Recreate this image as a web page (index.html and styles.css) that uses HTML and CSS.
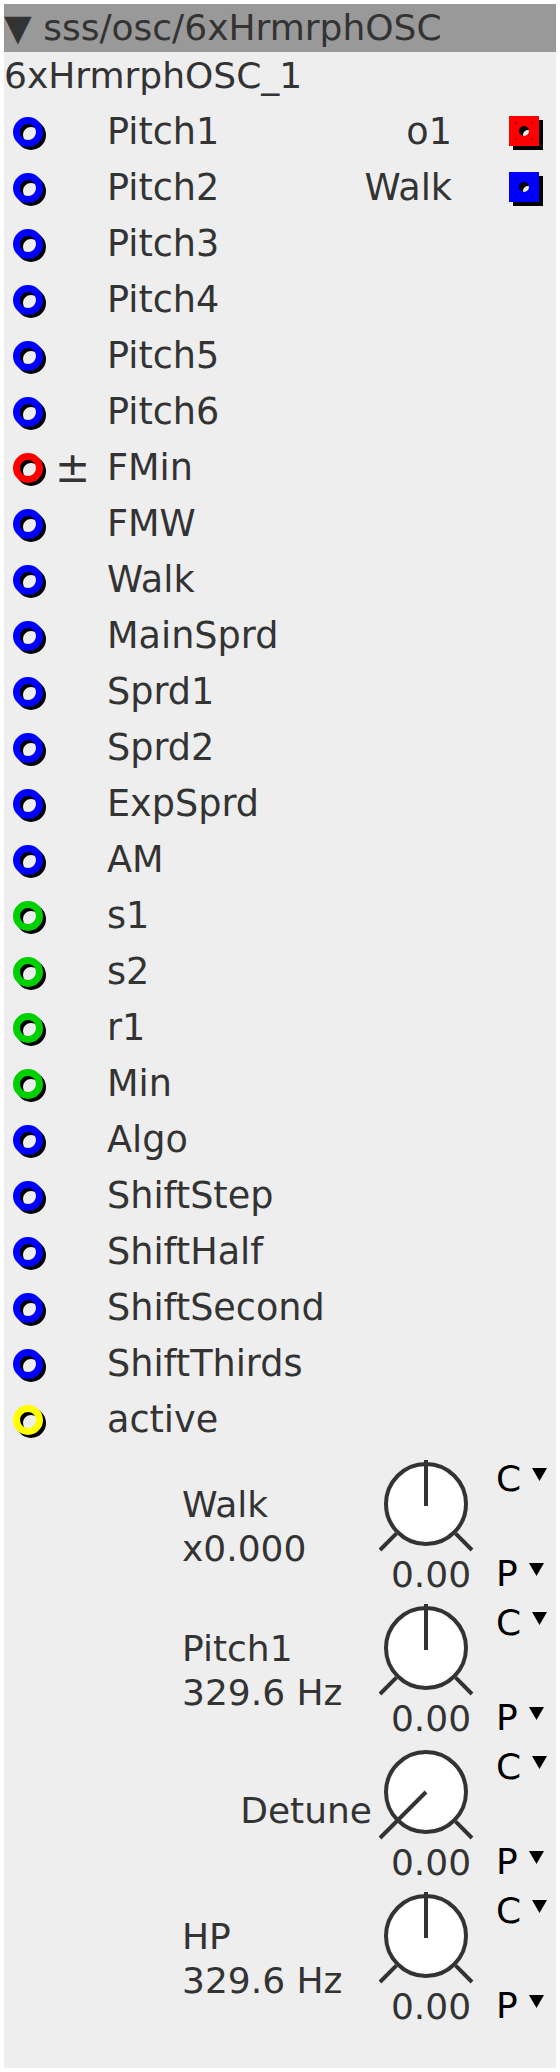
FILE: index.html
```html
<!DOCTYPE html>
<html lang="en">
<head>
    <meta charset="UTF-8">
    <title>6xHrmrphOSC</title>
    <link rel="stylesheet" href="styles.css">
</head>
<body>
    <div class="node">
        <div class="node-head">▼ sss/osc/6xHrmrphOSC</div>
        <div class="node-name">6xHrmrphOSC_1</div>

        <div class="ports">
            <div class="port">
                <span class="port-in"><svg class="jack blue" viewBox="0 0 36 36"><circle class="jack-shadow" cx="21" cy="21" r="11.5"/><circle class="jack-ring" cx="18" cy="18" r="11.5"/></svg></span>
                <span class="port-mod"></span>
                <span class="port-name">Pitch1</span>
                <span class="port-out-name">o1</span>
                <span class="port-out"><svg class="outlet red" viewBox="0 0 40 40"><path class="outlet-shadow" d="M8 8h30v30H8z M18 23a5 5 0 1 0 10 0a5 5 0 1 0 -10 0z"/><path class="outlet-box" d="M4 4h30v30H4z M14 19a5 5 0 1 0 10 0a5 5 0 1 0 -10 0z"/><path class="outlet-dots" d="M10 10h1.5v1.5H10z M26.5 10H28v1.5h-1.5z M10 26.5h1.5V28H10z M26.5 26.5H28V28h-1.5z"/></svg></span>
            </div>
            <div class="port">
                <span class="port-in"><svg class="jack blue" viewBox="0 0 36 36"><circle class="jack-shadow" cx="21" cy="21" r="11.5"/><circle class="jack-ring" cx="18" cy="18" r="11.5"/></svg></span>
                <span class="port-mod"></span>
                <span class="port-name">Pitch2</span>
                <span class="port-out-name">Walk</span>
                <span class="port-out"><svg class="outlet blue" viewBox="0 0 40 40"><path class="outlet-shadow" d="M8 8h30v30H8z M18 23a5 5 0 1 0 10 0a5 5 0 1 0 -10 0z"/><path class="outlet-box" d="M4 4h30v30H4z M14 19a5 5 0 1 0 10 0a5 5 0 1 0 -10 0z"/><path class="outlet-dots" d="M10 10h1.5v1.5H10z M26.5 10H28v1.5h-1.5z M10 26.5h1.5V28H10z M26.5 26.5H28V28h-1.5z"/></svg></span>
            </div>
            <div class="port">
                <span class="port-in"><svg class="jack blue" viewBox="0 0 36 36"><circle class="jack-shadow" cx="21" cy="21" r="11.5"/><circle class="jack-ring" cx="18" cy="18" r="11.5"/></svg></span>
                <span class="port-mod"></span>
                <span class="port-name">Pitch3</span>
            </div>
            <div class="port">
                <span class="port-in"><svg class="jack blue" viewBox="0 0 36 36"><circle class="jack-shadow" cx="21" cy="21" r="11.5"/><circle class="jack-ring" cx="18" cy="18" r="11.5"/></svg></span>
                <span class="port-mod"></span>
                <span class="port-name">Pitch4</span>
            </div>
            <div class="port">
                <span class="port-in"><svg class="jack blue" viewBox="0 0 36 36"><circle class="jack-shadow" cx="21" cy="21" r="11.5"/><circle class="jack-ring" cx="18" cy="18" r="11.5"/></svg></span>
                <span class="port-mod"></span>
                <span class="port-name">Pitch5</span>
            </div>
            <div class="port">
                <span class="port-in"><svg class="jack blue" viewBox="0 0 36 36"><circle class="jack-shadow" cx="21" cy="21" r="11.5"/><circle class="jack-ring" cx="18" cy="18" r="11.5"/></svg></span>
                <span class="port-mod"></span>
                <span class="port-name">Pitch6</span>
            </div>
            <div class="port">
                <span class="port-in"><svg class="jack red" viewBox="0 0 36 36"><circle class="jack-shadow" cx="21" cy="21" r="11.5"/><circle class="jack-ring" cx="18" cy="18" r="11.5"/></svg></span>
                <span class="port-mod">±</span>
                <span class="port-name">FMin</span>
            </div>
            <div class="port">
                <span class="port-in"><svg class="jack blue" viewBox="0 0 36 36"><circle class="jack-shadow" cx="21" cy="21" r="11.5"/><circle class="jack-ring" cx="18" cy="18" r="11.5"/></svg></span>
                <span class="port-mod"></span>
                <span class="port-name">FMW</span>
            </div>
            <div class="port">
                <span class="port-in"><svg class="jack blue" viewBox="0 0 36 36"><circle class="jack-shadow" cx="21" cy="21" r="11.5"/><circle class="jack-ring" cx="18" cy="18" r="11.5"/></svg></span>
                <span class="port-mod"></span>
                <span class="port-name">Walk</span>
            </div>
            <div class="port">
                <span class="port-in"><svg class="jack blue" viewBox="0 0 36 36"><circle class="jack-shadow" cx="21" cy="21" r="11.5"/><circle class="jack-ring" cx="18" cy="18" r="11.5"/></svg></span>
                <span class="port-mod"></span>
                <span class="port-name">MainSprd</span>
            </div>
            <div class="port">
                <span class="port-in"><svg class="jack blue" viewBox="0 0 36 36"><circle class="jack-shadow" cx="21" cy="21" r="11.5"/><circle class="jack-ring" cx="18" cy="18" r="11.5"/></svg></span>
                <span class="port-mod"></span>
                <span class="port-name">Sprd1</span>
            </div>
            <div class="port">
                <span class="port-in"><svg class="jack blue" viewBox="0 0 36 36"><circle class="jack-shadow" cx="21" cy="21" r="11.5"/><circle class="jack-ring" cx="18" cy="18" r="11.5"/></svg></span>
                <span class="port-mod"></span>
                <span class="port-name">Sprd2</span>
            </div>
            <div class="port">
                <span class="port-in"><svg class="jack blue" viewBox="0 0 36 36"><circle class="jack-shadow" cx="21" cy="21" r="11.5"/><circle class="jack-ring" cx="18" cy="18" r="11.5"/></svg></span>
                <span class="port-mod"></span>
                <span class="port-name">ExpSprd</span>
            </div>
            <div class="port">
                <span class="port-in"><svg class="jack blue" viewBox="0 0 36 36"><circle class="jack-shadow" cx="21" cy="21" r="11.5"/><circle class="jack-ring" cx="18" cy="18" r="11.5"/></svg></span>
                <span class="port-mod"></span>
                <span class="port-name">AM</span>
            </div>
            <div class="port">
                <span class="port-in"><svg class="jack green" viewBox="0 0 36 36"><circle class="jack-shadow" cx="21" cy="21" r="11.5"/><circle class="jack-ring" cx="18" cy="18" r="11.5"/></svg></span>
                <span class="port-mod"></span>
                <span class="port-name">s1</span>
            </div>
            <div class="port">
                <span class="port-in"><svg class="jack green" viewBox="0 0 36 36"><circle class="jack-shadow" cx="21" cy="21" r="11.5"/><circle class="jack-ring" cx="18" cy="18" r="11.5"/></svg></span>
                <span class="port-mod"></span>
                <span class="port-name">s2</span>
            </div>
            <div class="port">
                <span class="port-in"><svg class="jack green" viewBox="0 0 36 36"><circle class="jack-shadow" cx="21" cy="21" r="11.5"/><circle class="jack-ring" cx="18" cy="18" r="11.5"/></svg></span>
                <span class="port-mod"></span>
                <span class="port-name">r1</span>
            </div>
            <div class="port">
                <span class="port-in"><svg class="jack green" viewBox="0 0 36 36"><circle class="jack-shadow" cx="21" cy="21" r="11.5"/><circle class="jack-ring" cx="18" cy="18" r="11.5"/></svg></span>
                <span class="port-mod"></span>
                <span class="port-name">Min</span>
            </div>
            <div class="port">
                <span class="port-in"><svg class="jack blue" viewBox="0 0 36 36"><circle class="jack-shadow" cx="21" cy="21" r="11.5"/><circle class="jack-ring" cx="18" cy="18" r="11.5"/></svg></span>
                <span class="port-mod"></span>
                <span class="port-name">Algo</span>
            </div>
            <div class="port">
                <span class="port-in"><svg class="jack blue" viewBox="0 0 36 36"><circle class="jack-shadow" cx="21" cy="21" r="11.5"/><circle class="jack-ring" cx="18" cy="18" r="11.5"/></svg></span>
                <span class="port-mod"></span>
                <span class="port-name">ShiftStep</span>
            </div>
            <div class="port">
                <span class="port-in"><svg class="jack blue" viewBox="0 0 36 36"><circle class="jack-shadow" cx="21" cy="21" r="11.5"/><circle class="jack-ring" cx="18" cy="18" r="11.5"/></svg></span>
                <span class="port-mod"></span>
                <span class="port-name">ShiftHalf</span>
            </div>
            <div class="port">
                <span class="port-in"><svg class="jack blue" viewBox="0 0 36 36"><circle class="jack-shadow" cx="21" cy="21" r="11.5"/><circle class="jack-ring" cx="18" cy="18" r="11.5"/></svg></span>
                <span class="port-mod"></span>
                <span class="port-name">ShiftSecond</span>
            </div>
            <div class="port">
                <span class="port-in"><svg class="jack blue" viewBox="0 0 36 36"><circle class="jack-shadow" cx="21" cy="21" r="11.5"/><circle class="jack-ring" cx="18" cy="18" r="11.5"/></svg></span>
                <span class="port-mod"></span>
                <span class="port-name">ShiftThirds</span>
            </div>
            <div class="port">
                <span class="port-in"><svg class="jack yellow" viewBox="0 0 36 36"><circle class="jack-shadow" cx="21" cy="21" r="11.5"/><circle class="jack-ring" cx="18" cy="18" r="11.5"/></svg></span>
                <span class="port-mod"></span>
                <span class="port-name">active</span>
            </div>
        </div>

        <div class="knobs">
            <div class="knob">
                <div class="knob-label">Walk<br>x0.000</div>
                <div class="knob-dial">
                    <svg viewBox="0 0 96 96"><circle cx="48" cy="48" r="40"/><path d="M18.3 77.7L2 94 M77.7 77.7L94 94 M48 50V4"/></svg>
                    <div class="knob-value">0.00</div>
                </div>
                <div class="knob-modes">
                    <span class="mode">C<svg class="tri" viewBox="0 0 15 13"><path d="M0 0h15L7.5 13z"/></svg></span>
                    <span class="mode">P<svg class="tri" viewBox="0 0 15 13"><path d="M0 0h15L7.5 13z"/></svg></span>
                </div>
            </div>
            <div class="knob">
                <div class="knob-label">Pitch1<br>329.6 Hz</div>
                <div class="knob-dial">
                    <svg viewBox="0 0 96 96"><circle cx="48" cy="48" r="40"/><path d="M18.3 77.7L2 94 M77.7 77.7L94 94 M48 50V4"/></svg>
                    <div class="knob-value">0.00</div>
                </div>
                <div class="knob-modes">
                    <span class="mode">C<svg class="tri" viewBox="0 0 15 13"><path d="M0 0h15L7.5 13z"/></svg></span>
                    <span class="mode">P<svg class="tri" viewBox="0 0 15 13"><path d="M0 0h15L7.5 13z"/></svg></span>
                </div>
            </div>
            <div class="knob">
                <div class="knob-label single">Detune</div>
                <div class="knob-dial">
                    <svg viewBox="0 0 96 96"><circle cx="48" cy="48" r="40"/><path d="M18.3 77.7L2 94 M77.7 77.7L94 94 M48 48L2 94"/></svg>
                    <div class="knob-value">0.00</div>
                </div>
                <div class="knob-modes">
                    <span class="mode">C<svg class="tri" viewBox="0 0 15 13"><path d="M0 0h15L7.5 13z"/></svg></span>
                    <span class="mode">P<svg class="tri" viewBox="0 0 15 13"><path d="M0 0h15L7.5 13z"/></svg></span>
                </div>
            </div>
            <div class="knob">
                <div class="knob-label">HP<br>329.6 Hz</div>
                <div class="knob-dial">
                    <svg viewBox="0 0 96 96"><circle cx="48" cy="48" r="40"/><path d="M18.3 77.7L2 94 M77.7 77.7L94 94 M48 50V4"/></svg>
                    <div class="knob-value">0.00</div>
                </div>
                <div class="knob-modes">
                    <span class="mode">C<svg class="tri" viewBox="0 0 15 13"><path d="M0 0h15L7.5 13z"/></svg></span>
                    <span class="mode">P<svg class="tri" viewBox="0 0 15 13"><path d="M0 0h15L7.5 13z"/></svg></span>
                </div>
            </div>
        </div>
    </div>
</body>
</html>
```
FILE: styles.css
```css
body {
    margin: 4px;
    background-color: #fff;
    font-family: "DejaVu Sans", sans-serif;
    color: #333;
}

.node {
    background-color: #eee;
    height: 2064px;
    overflow: hidden;
}

.node-head {
    background-color: #999;
    height: 48px;
    line-height: 48px;
    font-size: 36px;
    white-space: nowrap;
}

.node-name {
    font-size: 36px;
    line-height: 48px;
    padding-bottom: 4px;
}

/* ports */

.port {
    display: flex;
    align-items: center;
    height: 56px;
    font-size: 36.6px;
    line-height: 56px;
}

.port-in {
    width: 50px;
    display: flex;
    align-items: center;
}

.jack {
    width: 36px;
    height: 36px;
    margin-left: 6px;
}

.jack circle {
    fill: none;
    stroke-width: 7;
}

.jack .jack-shadow {
    stroke: #000;
}

.jack .jack-ring {
    stroke: currentColor;
}

.blue { color: #00f; }
.red { color: #f00; }
.green { color: #00d000; }
.yellow { color: #ff0; }

.port-mod {
    width: 53px;
    font-size: 42px;
    text-indent: 1px;
}

.port-name {
    flex: 1;
}

.port-out-name {
    text-align: right;
}

.port-out {
    width: 104px;
    display: flex;
    align-items: center;
}

.outlet {
    width: 40px;
    height: 40px;
    margin-left: 53px;
}

.outlet-shadow {
    fill: #000;
    fill-rule: evenodd;
}

.outlet-box {
    fill: currentColor;
    fill-rule: evenodd;
}

.outlet-dots {
    fill: #000;
    opacity: 0.6;
}

/* knobs */

.knob {
    display: grid;
    grid-template-columns: 190px 106px 66px;
    column-gap: 6px;
    align-items: start;
    height: 144px;
    padding-left: 178px;
}

.knob-label {
    font-size: 36px;
    line-height: 44px;
    padding-top: 35px;
    white-space: nowrap;
}

.knob-label.single {
    text-align: right;
    padding-top: 53px;
}

.knob-dial svg {
    display: block;
    width: 96px;
    height: 96px;
    margin-top: 8px;
}

.knob-dial circle {
    fill: #fff;
    stroke: #333;
    stroke-width: 4;
}

.knob-dial path {
    fill: none;
    stroke: #333;
    stroke-width: 4;
}

.knob-value {
    font-size: 36px;
    line-height: 45px;
    text-align: center;
}

.knob-modes {
    display: flex;
    flex-direction: column;
    justify-content: space-between;
    height: 144px;
    padding-left: 6px;
    padding-top: 13px;
    box-sizing: border-box;
    color: #000;
}

.mode {
    font-size: 36px;
    line-height: 36px;
    white-space: nowrap;
}

.tri {
    width: 15px;
    height: 13px;
    margin-left: 11px;
    vertical-align: 10px;
}
```
